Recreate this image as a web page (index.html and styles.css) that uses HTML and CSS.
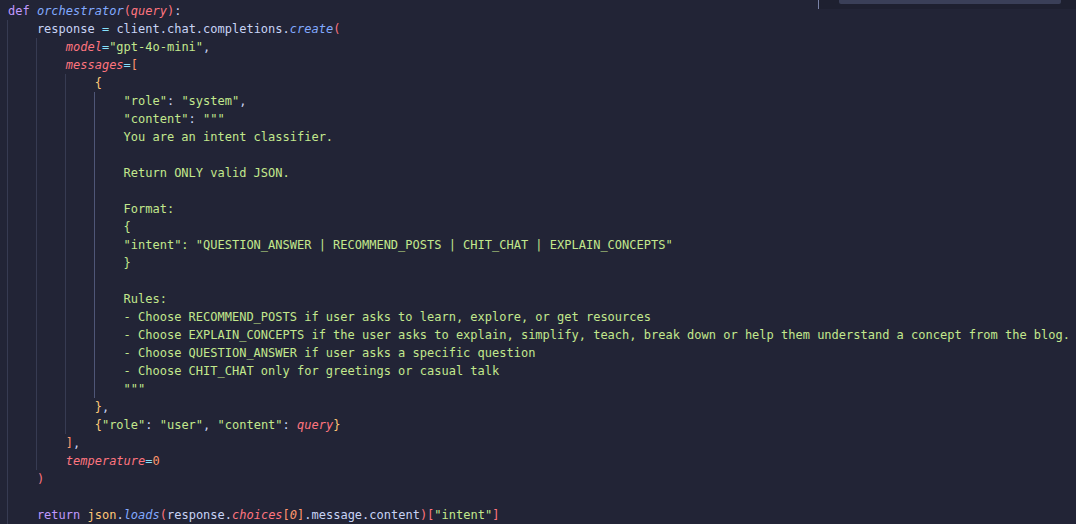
FILE: index.html
```html
<!DOCTYPE html>
<html>
<head>
<meta charset="utf-8">
<link rel="stylesheet" href="styles.css">
</head>
<body>
<div class="editor">
  <div class="ln"><span class="k">def</span> <span class="f">orchestrator</span><span class="bp">(</span><span class="p">query</span><span class="bp">)</span>:</div>
  <div class="blk">
    <div class="ln">response <span class="o">=</span> client.chat.completions.<span class="f">create</span><span class="bp">(</span></div>
    <div class="blk">
      <div class="ln"><span class="p">model</span><span class="o">=</span><span class="s">"gpt-4o-mini"</span>,</div>
      <div class="ln"><span class="p">messages</span><span class="o">=</span><span class="bo">[</span></div>
      <div class="blk">
        <div class="ln"><span class="by">{</span></div>
        <div class="blk active">
          <div class="ln"><span class="s">"role"</span>: <span class="s">"system"</span>,</div>
          <div class="ln"><span class="s">"content"</span>: <span class="s">"""</span></div>
          <div class="ln s">You are an intent classifier.</div>
          <div class="ln"></div>
          <div class="ln s">Return ONLY valid JSON.</div>
          <div class="ln"></div>
          <div class="ln s">Format:</div>
          <div class="ln s">{</div>
          <div class="ln s">"intent": "QUESTION_ANSWER | RECOMMEND_POSTS | CHIT_CHAT | EXPLAIN_CONCEPTS"</div>
          <div class="ln s">}</div>
          <div class="ln"></div>
          <div class="ln s">Rules:</div>
          <div class="ln s">- Choose RECOMMEND_POSTS if user asks to learn, explore, or get resources</div>
          <div class="ln s">- Choose EXPLAIN_CONCEPTS if the user asks to explain, simplify, teach, break down or help them understand a concept from the blog.</div>
          <div class="ln s">- Choose QUESTION_ANSWER if user asks a specific question</div>
          <div class="ln s">- Choose CHIT_CHAT only for greetings or casual talk</div>
          <div class="ln s">"""</div>
        </div>
        <div class="ln"><span class="by">}</span>,</div>
        <div class="ln"><span class="by">{</span><span class="s">"role"</span>: <span class="s">"user"</span>, <span class="s">"content"</span>: <span class="p">query</span><span class="by">}</span></div>
      </div>
      <div class="ln"><span class="bo">]</span>,</div>
      <div class="ln"><span class="p">temperature</span><span class="o">=</span><span class="n">0</span></div>
    </div>
    <div class="ln"><span class="bp">)</span></div>
    <div class="ln"></div>
    <div class="ln"><span class="k">return</span> <span class="y">json</span>.<span class="f">loads</span><span class="bp">(</span>response.<span class="p">choices</span><span class="bo">[</span><span class="n i">0</span><span class="bo">]</span>.message.content<span class="bp">)[</span><span class="s">"intent"</span><span class="bp">]</span></div>
  </div>
</div>
<div class="findwidget">
  <div class="findbox"></div>
</div>
</body>
</html>
```

FILE: styles.css
```css
html, body {
  margin: 0;
  padding: 0;
  background: #222436;
  width: 1076px;
  height: 524px;
  overflow: hidden;
}

.editor {
  padding: 2px 0 0 8px;
  font-family: "DejaVu Sans Mono", "Liberation Mono", monospace;
  font-size: 12px;
  color: #c8d3f5;
}

.ln {
  height: 18px;
  line-height: 18px;
  white-space: pre;
}

.blk {
  margin-left: -1px;
  border-left: 1px solid #373b52;
  padding-left: 4ch;
}

.blk.active {
  border-left-color: #4f5677;
}

.k { color: #c099ff; }
.f { color: #82aaff; font-style: italic; }
.p { color: #ff757f; font-style: italic; }
.o { color: #86e1fc; }
.s { color: #c3e88d; }
.n { color: #ff966c; }
.i { font-style: italic; }
.y { color: #ffc777; }
.bp { color: #ff757f; }
.bo { color: #ff966c; }
.by { color: #ffc777; }

.findwidget {
  position: absolute;
  top: 0;
  left: 818px;
  width: 257px;
  height: 9px;
  background: #1e2030;
  border-left: 1px solid #7a82a6;
}

.findbox {
  margin-left: 20px;
  width: 222px;
  height: 4px;
  background: #3a3f58;
  border-radius: 0 0 2px 2px;
}
```
